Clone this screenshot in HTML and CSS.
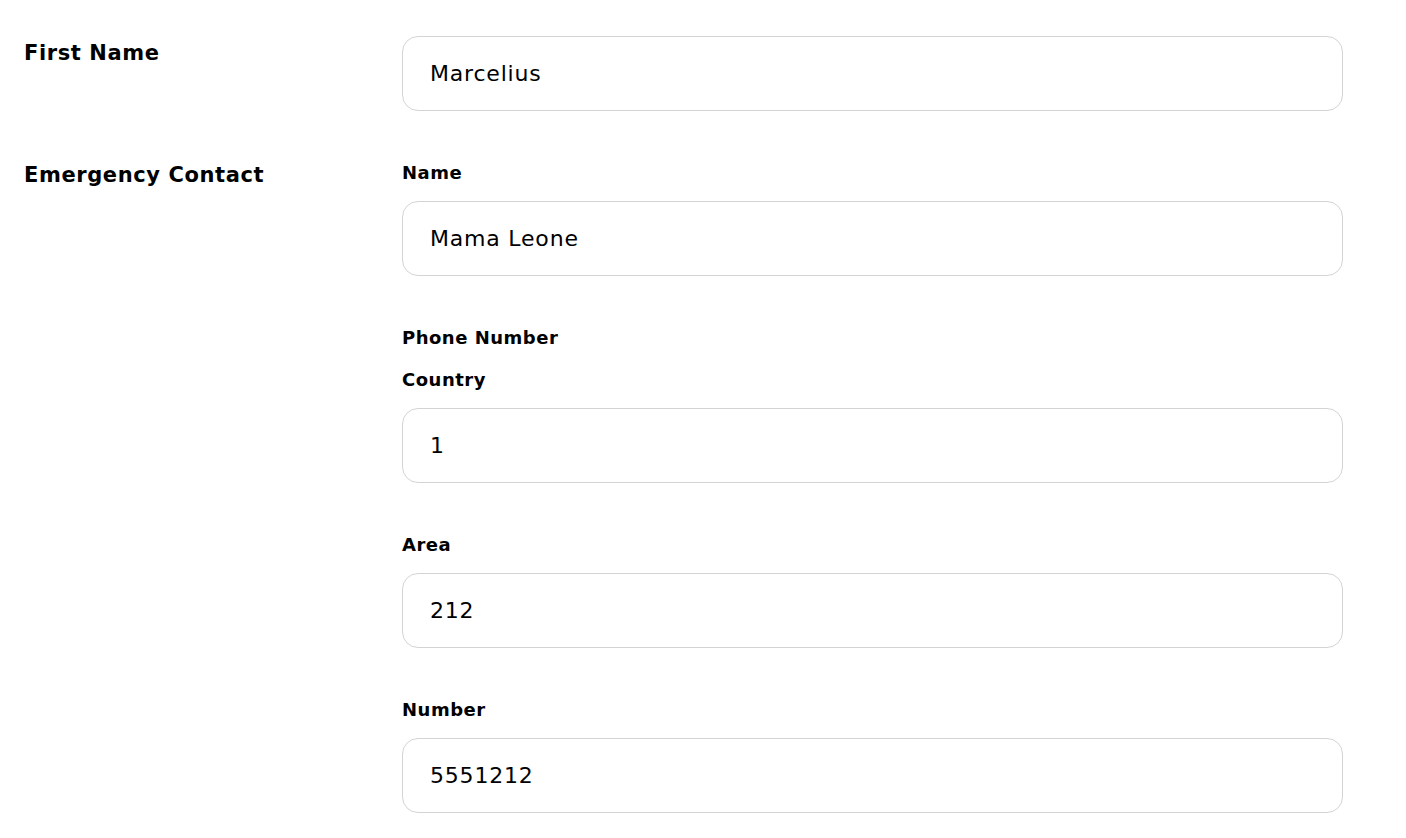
FILE: index.html
```html
<!DOCTYPE html>
<html>
<head>
<meta charset="utf-8">
<link rel="stylesheet" href="styles.css">
</head>
<body>
<form class="form">
  <div class="row">
    <div class="row-label">First Name</div>
    <div class="row-body">
      <input class="field-input" type="text" value="Marcelius">
    </div>
  </div>
  <div class="row">
    <div class="row-label">Emergency Contact</div>
    <div class="row-body">
      <div class="field">
        <label class="field-label">Name</label>
        <input class="field-input" type="text" value="Mama Leone">
      </div>
      <div class="field">
        <div class="group-label">Phone Number</div>
        <label class="field-label">Country</label>
        <input class="field-input" type="text" value="1">
      </div>
      <div class="field">
        <label class="field-label">Area</label>
        <input class="field-input" type="text" value="212">
      </div>
      <div class="field">
        <label class="field-label">Number</label>
        <input class="field-input" type="text" value="5551212">
      </div>
    </div>
  </div>
</form>
</body>
</html>
```
FILE: styles.css
```css
html, body {
  margin: 0;
  padding: 0;
  background: #ffffff;
}
body {
  font-family: "DejaVu Sans", sans-serif;
  color: #000000;
}
.form {
  display: flex;
  flex-direction: column;
  gap: 47px;
  padding: 36px 0 0 24px;
}
.row {
  display: grid;
  grid-template-columns: 378px 941px;
}
.row-label {
  font-size: 21px;
  line-height: 34px;
  font-weight: 700;
  letter-spacing: 0.6px;
}
.row-body {
  display: flex;
  flex-direction: column;
  gap: 47px;
}
.field {
  display: flex;
  flex-direction: column;
}
.group-label,
.field-label {
  display: block;
  font-size: 18px;
  line-height: 30px;
  font-weight: 700;
  letter-spacing: 0.5px;
}
.group-label {
  margin-bottom: 12px;
}
.field-label {
  margin-bottom: 13px;
}
.field-input {
  box-sizing: border-box;
  width: 941px;
  height: 75px;
  margin: 0;
  padding: 0 27px;
  border: 1px solid #d4d4d4;
  border-radius: 16px;
  background: #ffffff;
  font-family: "DejaVu Sans", sans-serif;
  font-size: 22px;
  letter-spacing: 0.8px;
  color: #000000;
  outline: none;
}
```
